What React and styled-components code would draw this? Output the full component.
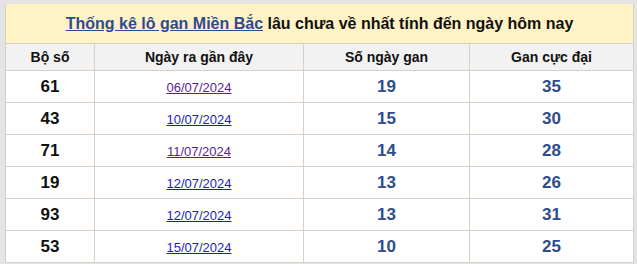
import React from "react";
import styled, { createGlobalStyle } from "styled-components";

const Global = createGlobalStyle`
  html, body { margin: 0; padding: 0; background: #e4e4e4; }
  body { font-family: "Liberation Sans", Arial, sans-serif; }
`;

const Wrap = styled.div`
  padding: 4px 4px 0 5px;
  height: 264px;
  box-sizing: border-box;
`;

const Table = styled.table`
  width: 628px;
  border-collapse: collapse;
  background: #fff;
  table-layout: fixed;
`;

const TitleCell = styled.th`
  height: 39px;
  padding: 0;
  background: #fff2c4;
  border: 1px solid #d8d0c6;
  border-top: none;
  font-family: "Liberation Sans", Arial, sans-serif;
  font-size: 16px;
  font-weight: bold;
  color: #111;
  text-align: center;
`;

const TitleLink = styled.a`
  color: #2b4d8d;
  text-decoration: underline;
`;

const HeadCell = styled.th`
  height: 26px;
  padding: 0;
  background: #f2f2f2;
  border: 1px solid #d8d0c6;
  font-size: 14px;
  font-weight: bold;
  color: #111;
  text-align: center;
`;

const Cell = styled.td`
  height: 31px;
  padding: 0;
  border: 1px solid #d8d0c6;
  text-align: center;
  font-weight: bold;
  font-size: 17px;
  color: ${(p) => (p.$blue ? "#2d4d8c" : "#111")};
`;

const DateLink = styled.a`
  font-size: 13px;
  font-weight: normal;
  color: ${(p) => (p.$visited ? "#5a1d96" : "#1a1ad0")};
  text-decoration: underline;
`;

const rows = [
  ["61", "06/07/2024", true, "19", "35"],
  ["43", "10/07/2024", false, "15", "30"],
  ["71", "11/07/2024", true, "14", "28"],
  ["19", "12/07/2024", false, "13", "26"],
  ["93", "12/07/2024", false, "13", "31"],
  ["53", "15/07/2024", false, "10", "25"],
];

export default function App() {
  return (
    <>
      <Global />
      <Wrap>
        <Table>
          <colgroup>
            <col style={{ width: 89 }} />
            <col style={{ width: 209 }} />
            <col style={{ width: 166 }} />
            <col style={{ width: 164 }} />
          </colgroup>
          <thead>
            <tr>
              <TitleCell colSpan={4}>
                <TitleLink href="#">Thống kê lô gan Miền Bắc</TitleLink> lâu chưa về nhất tính đến ngày hôm nay
              </TitleCell>
            </tr>
            <tr>
              <HeadCell>Bộ số</HeadCell>
              <HeadCell>Ngày ra gần đây</HeadCell>
              <HeadCell>Số ngày gan</HeadCell>
              <HeadCell>Gan cực đại</HeadCell>
            </tr>
          </thead>
          <tbody>
            {rows.map((r, i) => (
              <tr key={i}>
                <Cell>{r[0]}</Cell>
                <Cell>
                  <DateLink href="#" $visited={r[2]}>{r[1]}</DateLink>
                </Cell>
                <Cell $blue>{r[3]}</Cell>
                <Cell $blue>{r[4]}</Cell>
              </tr>
            ))}
          </tbody>
        </Table>
      </Wrap>
    </>
  );
}
